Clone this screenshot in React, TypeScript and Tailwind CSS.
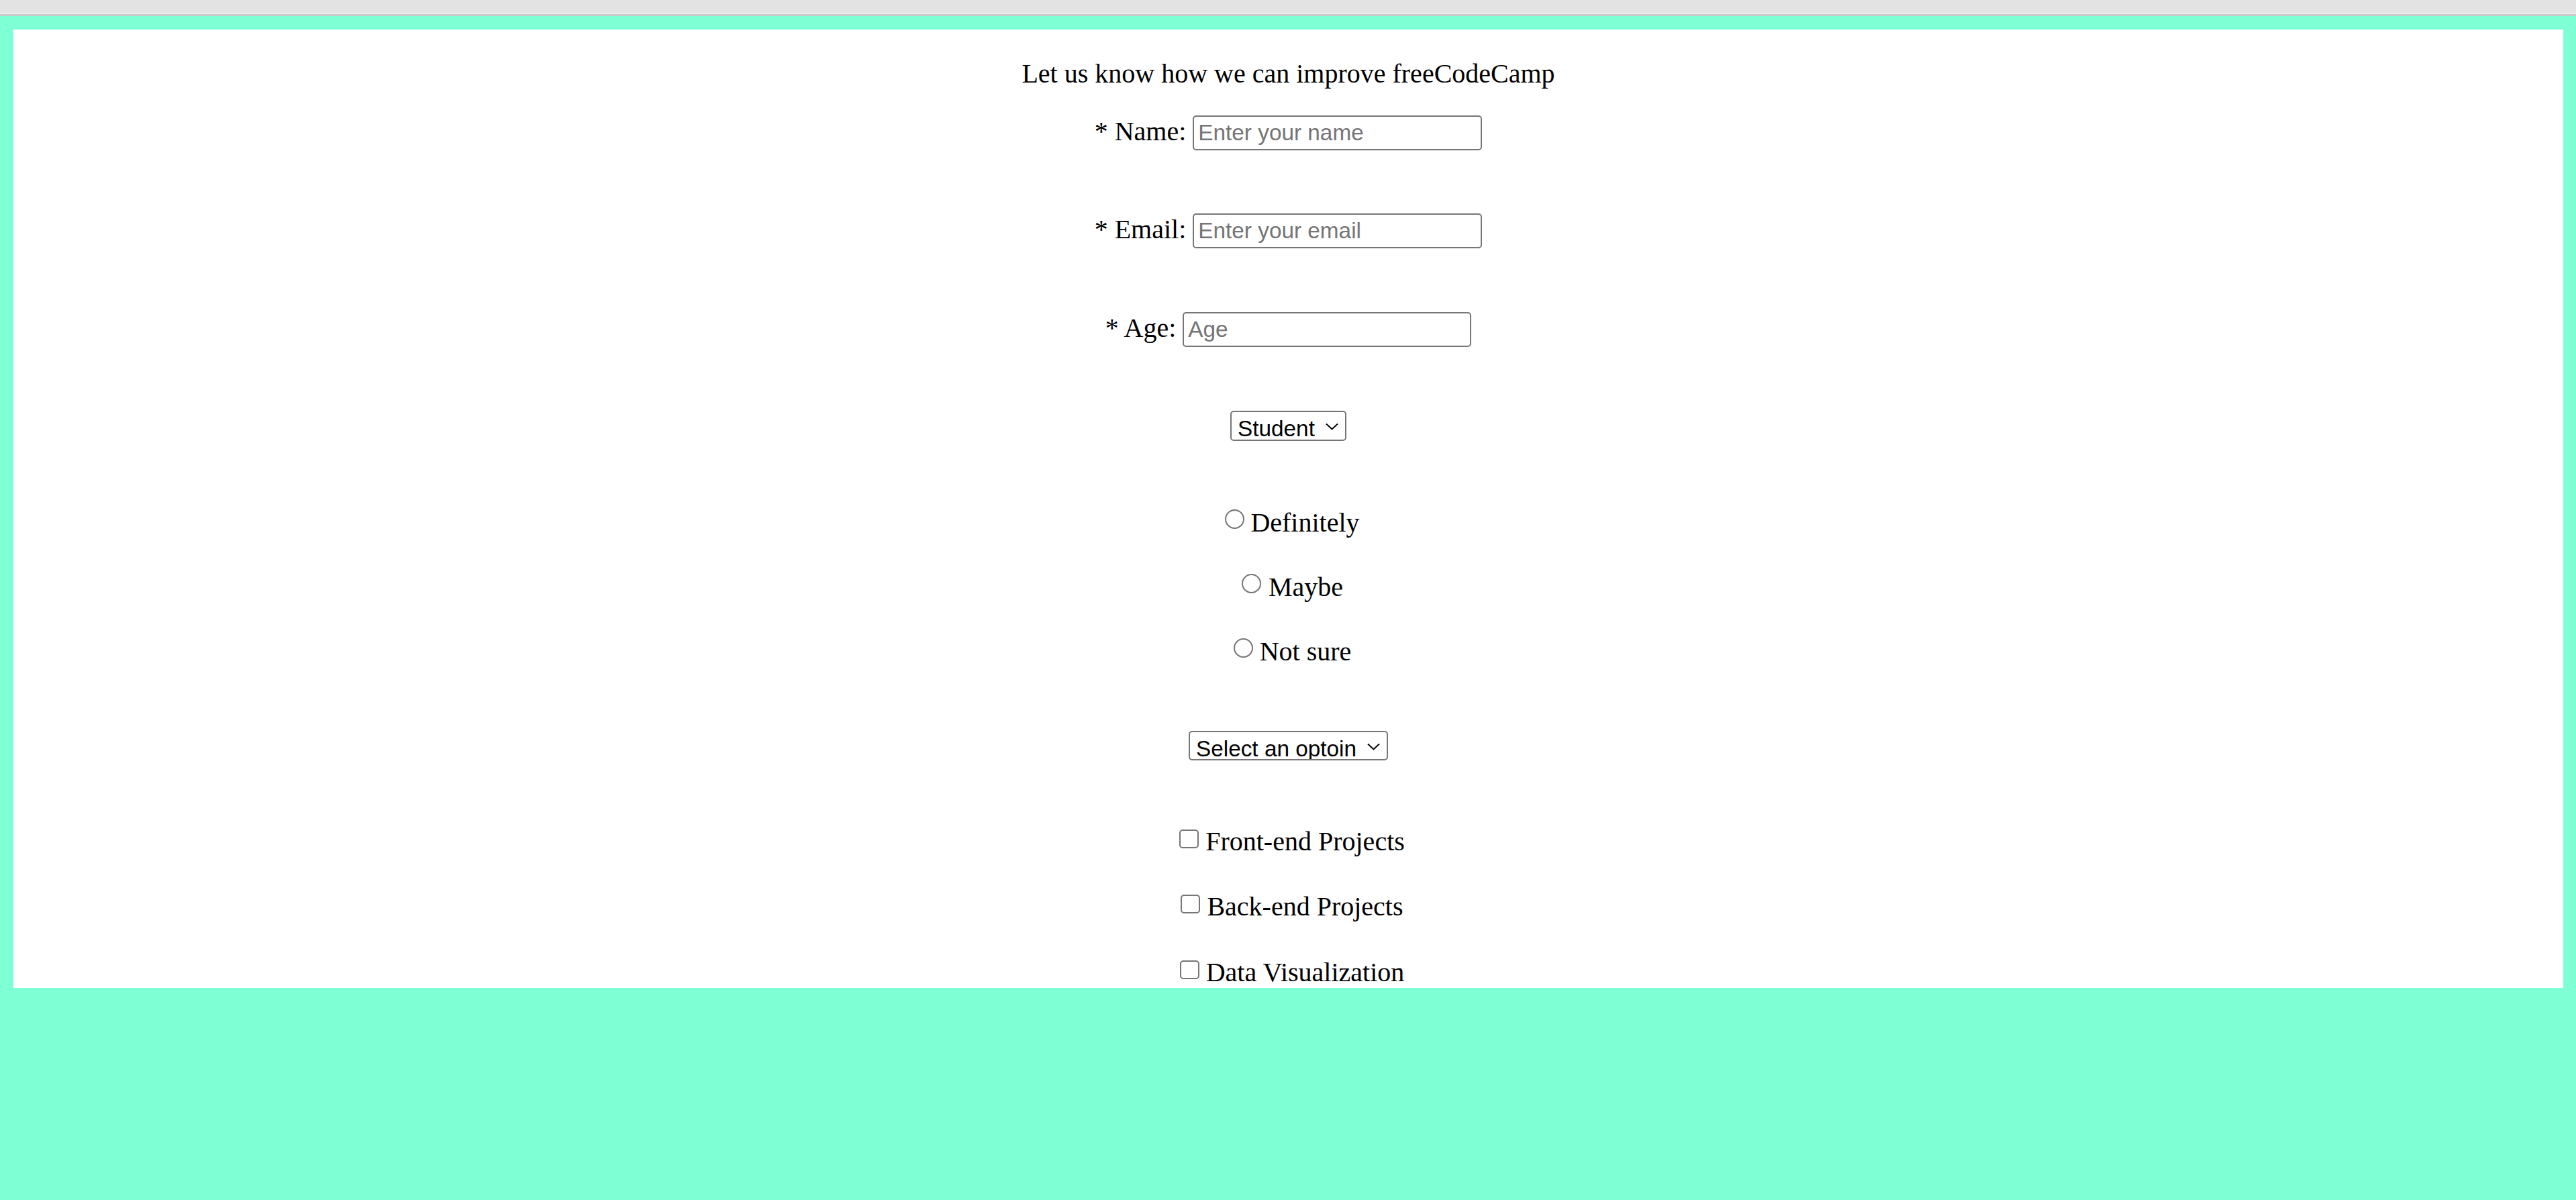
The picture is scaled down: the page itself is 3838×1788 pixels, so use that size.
import React from "react";

const serif =
  "font-['Liberation_Serif','Times_New_Roman',serif] text-[40px] leading-[46px] text-black whitespace-nowrap";

function TextRow({
  mt,
  label,
  placeholder,
  type,
  width,
}: {
  mt: string;
  label: string;
  placeholder: string;
  type: string;
  width: string;
}) {
  return (
    <div className={`flex h-[52px] items-center ${mt}`}>
      <label className={`mr-[10px] mb-[4px] ${serif}`}>{label}</label>
      <input
        type={type}
        placeholder={placeholder}
        className={`h-[52px] ${width} rounded-[5px] border-2 border-[#767676] bg-white px-[6px] font-['Liberation_Sans',Arial,sans-serif] text-[33.33px] text-black outline-none placeholder:text-[#757575]`}
      />
    </div>
  );
}

function Chevron() {
  return (
    <svg
      width="19"
      height="11"
      viewBox="0 0 19 11"
      className="pointer-events-none absolute right-[12px] top-[18px]"
    >
      <polyline points="1,1.5 9.5,9.5 18,1.5" fill="none" stroke="#000" strokeWidth="2" />
    </svg>
  );
}

function Dropdown({
  mt,
  h,
  w,
  options,
}: {
  mt: string;
  h: string;
  w: string;
  options: string[];
}) {
  return (
    <div className={`relative inline-flex ${mt}`}>
      <select
        className={`${h} ${w} appearance-none rounded-[5px] border-2 border-[#767676] bg-white pl-[9px] pr-[45px] font-['Liberation_Sans',Arial,sans-serif] text-[33.33px] text-black outline-none`}
      >
        {options.map((o) => (
          <option key={o}>{o}</option>
        ))}
      </select>
      <Chevron />
    </div>
  );
}

function Radio({ mt, label, gap }: { mt: string; label: string; gap: string }) {
  return (
    <label className={`${mt} ${serif}`}>
      <input
        type="radio"
        name="recommend"
        className={`ml-[12px] ${gap} mb-[4px] inline-block h-[29px] w-[29px] appearance-none rounded-full border-2 border-[#767676] bg-white align-baseline`}
      />
      {label}
    </label>
  );
}

function Check({ mt, label }: { mt: string; label: string }) {
  return (
    <label className={`${mt} ${serif}`}>
      <input
        type="checkbox"
        className="ml-[11px] mr-[10px] mb-[3px] inline-block h-[28px] w-[29px] appearance-none rounded-[5px] border-2 border-[#767676] bg-white align-baseline"
      />
      {label}
    </label>
  );
}

export default function App() {
  return (
    <div className="min-h-screen bg-[#7fffd4]">
      <div className="h-[19px] bg-[#e3e3e3]" />
      <div className="h-[2px] bg-[#eeeeee]" />
      <div className="h-[3px] bg-[#c9cbca]" />
      <div className="pt-[20px] pl-[20px] pr-[19px]">
        <main className="h-[1428px] overflow-hidden bg-white">
          <form className="flex flex-col items-center">
            <p className={`mt-[43px] ${serif}`}>Let us know how we can improve freeCodeCamp</p>
            <TextRow mt="mt-[39px]" label="* Name:" placeholder="Enter your name" type="text" width="w-[431px]" />
            <TextRow mt="mt-[94px]" label="* Email:" placeholder="Enter your email" type="email" width="w-[431px]" />
            <TextRow mt="mt-[95px]" label="* Age:" placeholder="Age" type="number" width="w-[430px]" />
            <Dropdown
              mt="mt-[95px]"
              h="h-[45px]"
              w="w-[173px]"
              options={["Student", "Full Time Job", "Full Time Learner", "Prefer not to say", "Other"]}
            />
            <Radio mt="mt-[99px]" label="Definitely" gap="mr-[9px]" />
            <Radio mt="mt-[50px]" label="Maybe" gap="mr-[11px]" />
            <Radio mt="mt-[50px]" label="Not sure" gap="mr-[10px]" />
            <Dropdown
              mt="mt-[95px]"
              h="h-[44px]"
              w="w-[297px]"
              options={["Select an optoin", "Challenges", "Projects", "Community", "Open Source"]}
            />
            <Check mt="mt-[98px]" label="Front-end Projects" />
            <Check mt="mt-[51px]" label="Back-end Projects" />
            <Check mt="mt-[52px]" label="Data Visualization" />
          </form>
        </main>
      </div>
    </div>
  );
}
